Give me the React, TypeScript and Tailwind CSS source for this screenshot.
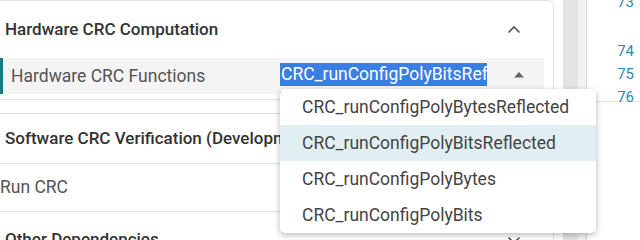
const MENU_ITEMS = [
  'CRC_runConfigPolyBytesReflected',
  'CRC_runConfigPolyBitsReflected',
  'CRC_runConfigPolyBytes',
  'CRC_runConfigPolyBits',
];

function Chevron({ up }: { up?: boolean }) {
  return (
    <svg width="14" height="9" viewBox="0 0 14 9" className="text-[#555]">
      <path
        d={up ? 'M1.5 7.5 L7 2 L12.5 7.5' : 'M1.5 1.5 L7 7 L12.5 1.5'}
        fill="none"
        stroke="currentColor"
        strokeWidth="1.6"
      />
    </svg>
  );
}

export default function App() {
  return (
    <div className="relative w-[640px] h-[240px] overflow-hidden bg-white flex font-['Roboto',sans-serif]">
      {/* Config cards */}
      <div className="w-[554px] shrink-0 flex flex-col">
        {/* Hardware CRC Computation */}
        <div className="h-[100px] shrink-0 border-t border-r border-b border-[#e0e0e0] rounded-tr-[6px] flex flex-col">
          <div className="h-[57px] flex items-center justify-between pl-[5px] pr-[32px]">
            <span className="text-[17px] font-medium text-[#333]">Hardware CRC Computation</span>
            <Chevron up />
          </div>
          <div className="h-[36px] mr-[9px] bg-[#f4f4f4] flex items-center">
            <div className="w-[3px] self-stretch bg-[#1d7b80]" />
            <span className="w-[277px] pl-[8px] text-[17.5px] text-[#555]">Hardware CRC Functions</span>
            <div className="w-[255px] h-[31px] self-start mt-[5px] border-b-2 border-[#1d7b80] flex items-start">
              <div className="w-[207px] h-[23px] bg-[#3a7ee4] text-white text-[17.5px] leading-[23px] whitespace-nowrap overflow-hidden pl-px">
                CRC_runConfigPolyBitsReflected
              </div>
              <div className="flex-1 flex justify-end pr-[10px] pt-[8px]">
                <svg width="12" height="7" viewBox="0 0 12 7">
                  <path d="M1 6.5 L6 1 L11 6.5 Z" fill="#666" />
                </svg>
              </div>
            </div>
          </div>
        </div>

        <div className="h-[13px] shrink-0" />

        {/* Software CRC Verification */}
        <div className="shrink-0 border-t border-r border-[#e0e0e0] flex flex-col">
          <div className="h-[50px] flex items-center pl-[5px] border-b border-[#e0e0e0]">
            <span className="text-[17px] font-medium text-[#333] whitespace-nowrap">
              Software CRC Verification (Development)
            </span>
          </div>
          <div className="h-[48px] flex items-center border-b border-[#e0e0e0]">
            <span className="text-[17.5px] text-[#555]">Run CRC</span>
          </div>
          <div className="h-[56px] flex items-center justify-between pl-[5px] pr-[32px]">
            <span className="text-[17px] font-medium text-[#333]">Other Dependencies</span>
            <Chevron />
          </div>
        </div>
      </div>

      {/* Scrollbar */}
      <div className="w-[9px] shrink-0" />
      <div className="w-[15px] shrink-0 bg-[#e4e4e4]" />
      <div className="w-[8px] shrink-0 bg-[#f2f2f2]" />

      {/* Code gutter */}
      <div className="flex-1 border-l border-[#dcdcdc] flex flex-col">
        <div className="h-[102px] border-b border-[#e4e4e4] flex flex-col items-end pr-[6px] text-[15px] text-[#3486b8] leading-[23px]">
          <span className="-mt-[9px]">73</span>
          <span className="mt-[26px]">74</span>
          <span>75</span>
          <span>76</span>
        </div>
      </div>

      {/* Open dropdown menu */}
      <div className="absolute left-[280px] top-[89px] w-[316px] h-[144px] bg-white rounded-[5px] shadow-[0_2px_6px_rgba(0,0,0,0.28)] flex flex-col overflow-hidden">
        {MENU_ITEMS.map((item, i) => (
          <div
            key={item}
            className={`h-[36px] shrink-0 flex items-center pl-[22px] text-[17.5px] text-[#444] ${
              i === 1 ? 'bg-[#e1eff3]' : ''
            }`}
          >
            {item}
          </div>
        ))}
      </div>
    </div>
  );
}
